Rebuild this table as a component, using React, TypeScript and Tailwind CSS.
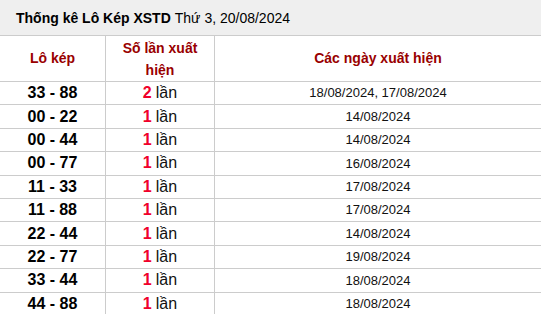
import React from 'react';

const rows: { pair: string; count: number; dates: string }[] = [
  { pair: '33 - 88', count: 2, dates: '18/08/2024, 17/08/2024' },
  { pair: '00 - 22', count: 1, dates: '14/08/2024' },
  { pair: '00 - 44', count: 1, dates: '14/08/2024' },
  { pair: '00 - 77', count: 1, dates: '16/08/2024' },
  { pair: '11 - 33', count: 1, dates: '17/08/2024' },
  { pair: '11 - 88', count: 1, dates: '17/08/2024' },
  { pair: '22 - 44', count: 1, dates: '14/08/2024' },
  { pair: '22 - 77', count: 1, dates: '19/08/2024' },
  { pair: '33 - 44', count: 1, dates: '18/08/2024' },
  { pair: '44 - 88', count: 1, dates: '18/08/2024' },
];

const App: React.FC = () => {
  return (
    <div className="w-[541px] h-[314px] overflow-hidden bg-white text-black font-['Liberation_Sans',Arial,sans-serif]">
      {/* tiêu đề */}
      <div className="h-[36px] bg-[#efefef] border-b border-[#cccccc] flex items-center pl-[16px] text-[14px] pt-[1px]">
        <span className="font-bold">Thống kê Lô Kép XSTD</span>
        <span className="ml-[4px]">Thứ 3, 20/08/2024</span>
      </div>

      <div className="grid grid-cols-[106px_109px_1fr]">
        {/* hàng tiêu đề */}
        <div className="h-[46px] border-b border-r border-[#cccccc] flex items-center justify-center text-[14px] font-bold text-[#990000]">
          Lô kép
        </div>
        <div className="h-[46px] border-b border-r border-[#cccccc] flex items-center justify-center text-center text-[14px] font-bold text-[#990000] leading-[22px] px-[6px]">
          Số lần xuất hiện
        </div>
        <div className="h-[46px] border-b border-[#cccccc] flex items-center justify-center text-[14px] font-bold text-[#990000]">
          Các ngày xuất hiện
        </div>

        {rows.map((r) => (
          <React.Fragment key={r.pair}>
            <div className="h-[23.4px] border-b border-r border-[#cccccc] flex items-center justify-center text-[16px] font-bold">
              {r.pair}
            </div>
            <div className="h-[23.4px] border-b border-r border-[#cccccc] flex items-center justify-center text-[16px]">
              <span className="font-bold text-[#f0002a]">{r.count}</span>
              <span className="ml-[4px] text-[#111111]">lần</span>
            </div>
            <div className="h-[23.4px] border-b border-[#cccccc] flex items-center justify-center text-[13px] text-[#111111]">
              {r.dates}
            </div>
          </React.Fragment>
        ))}
      </div>
    </div>
  );
};

export default App;
